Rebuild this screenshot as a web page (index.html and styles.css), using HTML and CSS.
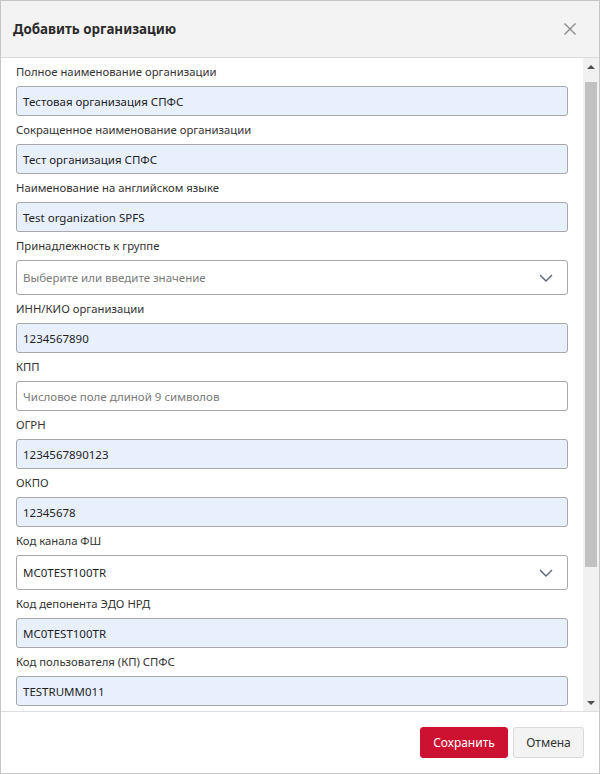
FILE: index.html
```html
<!DOCTYPE html>
<html lang="ru">
<head>
<meta charset="utf-8">
<link rel="stylesheet" href="styles.css">
</head>
<body>
<div class="modal">
  <div class="modal-header">
    <div class="modal-title">Добавить организацию</div>
    <svg class="close" width="14" height="14" viewBox="0 0 14 14"><path d="M1.5 1.5 L12.5 12.5 M12.5 1.5 L1.5 12.5" stroke="#8a8a8a" stroke-width="1.4" fill="none"/></svg>
  </div>
  <div class="modal-body">
    <div class="content">
      <div class="field"><div class="label">Полное наименование организации</div><div class="input filled">Тестовая организация СПФС</div></div>
      <div class="field"><div class="label">Сокращенное наименование организации</div><div class="input filled">Тест организация СПФС</div></div>
      <div class="field"><div class="label">Наименование на английском языке</div><div class="input filled">Test organization SPFS</div></div>
      <div class="field"><div class="label">Принадлежность к группе</div><div class="input select"><span class="placeholder">Выберите или введите значение</span><svg class="chev" width="14" height="8" viewBox="0 0 14 8"><path d="M1 1 L7 7 L13 1" stroke="#5a6470" stroke-width="1.4" fill="none"/></svg></div></div>
      <div class="field"><div class="label">ИНН/КИО организации</div><div class="input filled">1234567890</div></div>
      <div class="field"><div class="label">КПП</div><div class="input"><span class="placeholder">Числовое поле длиной 9 символов</span></div></div>
      <div class="field"><div class="label">ОГРН</div><div class="input filled">1234567890123</div></div>
      <div class="field"><div class="label">ОКПО</div><div class="input filled">12345678</div></div>
      <div class="field"><div class="label">Код канала ФШ</div><div class="input select"><span>MC0TEST100TR</span><svg class="chev" width="14" height="8" viewBox="0 0 14 8"><path d="M1 1 L7 7 L13 1" stroke="#5a6470" stroke-width="1.4" fill="none"/></svg></div></div>
      <div class="field"><div class="label">Код депонента ЭДО НРД</div><div class="input filled">MC0TEST100TR</div></div>
      <div class="field"><div class="label">Код пользователя (КП) СПФС</div><div class="input filled">TESTRUMM011</div></div>
    </div>
    <div class="scrollbar">
      <div class="arrow up"></div>
      <div class="track"><div class="thumb"></div></div>
      <div class="arrow down"></div>
    </div>
  </div>
  <div class="modal-footer">
    <button class="btn btn-primary">Сохранить</button>
    <button class="btn btn-default">Отмена</button>
  </div>
</div>
</body>
</html>
```
FILE: styles.css
```css
html, body {
  margin: 0;
  padding: 0;
  background: #ffffff;
}
body {
  font-family: "Noto Sans", "Open Sans", "Liberation Sans", sans-serif;
  font-size: 11.3px;
  color: #333333;
}
.modal {
  width: 600px;
  height: 774px;
  box-sizing: border-box;
  border: 1px solid #c6c6c6;
  display: flex;
  flex-direction: column;
  background: #ffffff;
}
.modal-header {
  height: 56px;
  flex: none;
  background: #f3f3f3;
  border-bottom: 1px solid #dcdcdc;
  display: flex;
  align-items: center;
  justify-content: space-between;
  padding: 0 22px 0 12px;
}
.modal-title {
  font-size: 13.4px;
  font-weight: 700;
  color: #2b2b2b;
}
.close {
  display: block;
}
.modal-body {
  flex: 1;
  display: flex;
  min-height: 0;
  border-bottom: 1px solid #dedede;
}
.content {
  flex: 1;
  overflow: hidden;
  padding: 5px 15px 0 15px;
}
.field {
  margin-bottom: 5px;
}
.label {
  line-height: 18px;
  margin-bottom: 5px;
  color: #333333;
  white-space: nowrap;
}
.input {
  height: 30px;
  box-sizing: border-box;
  border: 1px solid #a8a8a8;
  border-radius: 3px;
  padding: 0 6px;
  display: flex;
  align-items: center;
  color: #1f1f1f;
  font-size: 11.5px;
  background: #ffffff;
  white-space: nowrap;
}
.input.filled {
  background: #e8f0fe;
}
.input.select {
  height: 35px;
  justify-content: space-between;
  padding-right: 14px;
}
.placeholder {
  color: #7a7a7a;
}
.chev {
  display: block;
}
.scrollbar {
  width: 16px;
  flex: none;
  background: #f1f1f1;
  display: flex;
  flex-direction: column;
}
.arrow {
  height: 17px;
  flex: none;
  display: flex;
  align-items: center;
  justify-content: center;
}
.arrow::before {
  content: "";
  width: 0;
  height: 0;
  border-left: 4px solid transparent;
  border-right: 4px solid transparent;
}
.arrow.up::before {
  border-bottom: 4px solid #505050;
}
.arrow.down::before {
  border-top: 4px solid #505050;
}
.track {
  flex: 1;
  padding: 7px 2px 0 2px;
}
.thumb {
  height: 485px;
  background: #c1c1c1;
}
.modal-footer {
  height: 61px;
  flex: none;
  display: flex;
  justify-content: flex-end;
  align-items: flex-start;
  gap: 5px;
  padding: 15px 15px 0 0;
  box-sizing: border-box;
}
.btn {
  height: 31px;
  border-radius: 3px;
  font-family: "Noto Sans", "Open Sans", "Liberation Sans", sans-serif;
  font-size: 12px;
  padding: 0 10px;
  cursor: pointer;
}
.btn-primary {
  width: 88px;
  background: #cc1230;
  border: 1px solid #cc1230;
  color: #ffffff;
}
.btn-default {
  width: 71px;
  background: #f3f3f3;
  border: 1px solid #dadada;
  color: #333333;
}
```
